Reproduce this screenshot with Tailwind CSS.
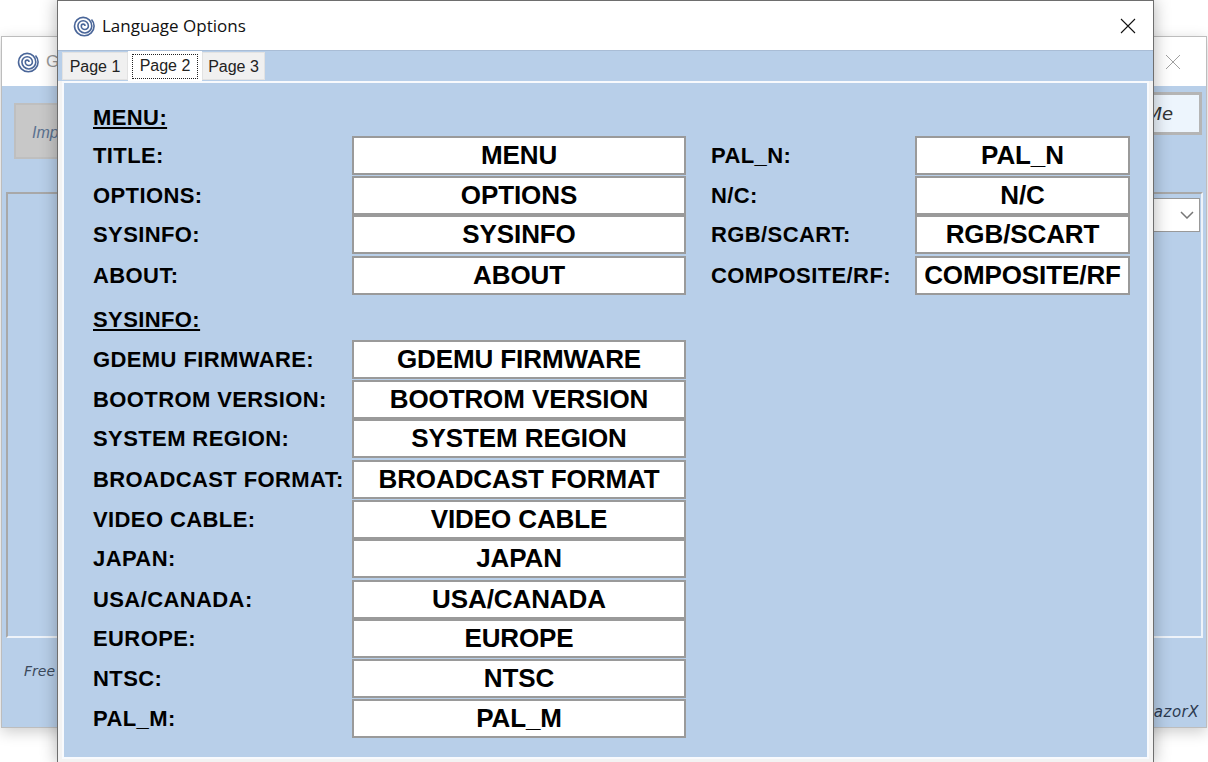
<!DOCTYPE html>
<html lang="en">
<head>
    <meta charset="UTF-8">
    <title>Language Options</title>
    <script src="https://cdn.jsdelivr.net/npm/@tailwindcss/browser@4"></script>
</head>
<body class="bg-white font-['Liberation_Sans',sans-serif] overflow-hidden">
<div class="relative w-[1208px] h-[762px] overflow-hidden bg-white">

    <!-- Window behind -->
    <div class="absolute left-[1px] top-[36px] w-[1206px] h-[692px] border border-[#bdbdbd] bg-white shadow-[0_4px_14px_rgba(0,0,0,0.2)] flex flex-col">
        <div class="h-[49px] flex items-center justify-between pl-[14px] pr-[25px] shrink-0">
            <div class="flex items-center gap-[6px]">
                <svg width="24" height="24" viewBox="0 0 24 24" fill="none" stroke="#4a6699" stroke-width="1.600"><path d="M13 12A1.850 1.850 0 0 0 9.300 12A3.550 3.550 0 0 0 16.400 12A5.250 5.250 0 0 0 5.900 12A6.950 6.950 0 0 0 19.800 12A8.650 8.650 0 0 0 2.500 12A9.800 9.800 0 0 0 22.100 12A10 10 0 0 0 19.500 5.500"/></svg>
                <span class="text-[17px] text-[#999]">G</span>
            </div>
            <svg width="16" height="16" viewBox="0 0 16 16" stroke="#a0a0a0" stroke-width="1"><path d="M1 1l14 14M15 1L1 15"/></svg>
        </div>
        <div class="flex-1 bg-[#b8cfe9] relative">
            <div class="absolute left-[12px] top-[17px] w-[60px] h-[56px] bg-[#c8c8c8] border-2 border-[#bfbfbf] pl-[16px] pt-[16px] text-[16px] italic text-[#5b7290]">Imp</div>
            <div class="absolute right-[4px] top-[6px] w-[80px] h-[43px] bg-[#edf5fd] border-[3px] border-[#b5b5b5] pr-[26px] text-[18px] italic font-['DejaVu_Sans',sans-serif] text-[#333] flex items-center justify-end">Me</div>
            <div class="absolute left-[4px] top-[106px] right-[3px] h-[446px] border-2 border-t-[#a8a8a8] border-l-[#a8a8a8] border-r-[#eef3f9] border-b-[#eef3f9]"></div>
            <div class="absolute right-[6px] top-[112px] w-[60px] h-[34px] bg-white border border-[#999] flex items-center justify-end pr-[5px]">
                <svg width="14" height="8" viewBox="0 0 14 8" fill="none" stroke="#777" stroke-width="1.500"><path d="M1 1l6 6 6-6"/></svg>
            </div>
            <span class="absolute left-[22px] top-[575px] text-[14px] italic font-['DejaVu_Sans',sans-serif] text-[#3c4a5c]">Free</span>
            <span class="absolute right-[7px] top-[615px] text-[15px] italic font-['DejaVu_Sans',sans-serif] text-[#2c3a50] tracking-[0.5px]">azorX</span>
        </div>
    </div>

    <!-- Language Options window -->
    <div class="absolute left-[57px] top-0 w-[1097px] h-[763px] border border-[#6e6e6e] bg-white shadow-[0_0_16px_rgba(0,0,0,0.3)] flex flex-col">
        <div class="h-[49px] shrink-0 flex items-center justify-between pl-[14px] pr-[17px]">
            <div class="flex items-center gap-[6px]">
                <svg width="24" height="24" viewBox="0 0 24 24" fill="none" stroke="#4a6699" stroke-width="1.600"><path d="M13 12A1.850 1.850 0 0 0 9.300 12A3.550 3.550 0 0 0 16.400 12A5.250 5.250 0 0 0 5.900 12A6.950 6.950 0 0 0 19.800 12A8.650 8.650 0 0 0 2.500 12A9.800 9.800 0 0 0 22.100 12A10 10 0 0 0 19.500 5.500"/></svg>
                <span class="text-[17px] font-['Open_Sans',sans-serif] text-[#111]">Language Options</span>
            </div>
            <svg width="16" height="16" viewBox="0 0 16 16" stroke="#111" stroke-width="1.100"><path d="M1 1l14 14M15 1L1 15"/></svg>
        </div>

        <div class="flex-1 border-t border-[#a9bdd6] flex flex-col bg-[#f3f3f3]">
            <!-- Tabs -->
            <div class="h-[30px] bg-[#b8cfe9] flex items-end pl-[4px] text-[16px] text-[#222] shrink-0">
                <div class="h-[28px] mb-px pt-[2px] w-[66px] bg-[#f0f0f0] border border-[#e2e2e2] flex items-center justify-center">Page 1</div>
                <div class="h-[30px] w-[74px] bg-white px-[4px] pt-[3px] pb-[2px] relative">
                    <div class="h-[25px] pb-[2px] border border-dotted border-[#222] flex items-center justify-center">Page 2</div>
                </div>
                <div class="h-[28px] mb-px pt-[2px] w-[63px] bg-[#f0f0f0] border border-[#e2e2e2] flex items-center justify-center">Page 3</div>
            </div>

            <!-- Tab body -->
            <div class="h-[678px] mx-[4px] shrink-0 border-2 border-[#f8fafd] bg-[#b8cfe9] pl-[29px] pr-[15px] pt-[23px] flex text-black font-bold">
                <div class="w-[593px] shrink-0">
                    <p class="text-[22px] tracking-[0.4px] leading-[24px] underline h-[24px]">MENU:</p>
                    <div class="mt-[6px] flex flex-col">
                        <div class="flex items-center h-[39px]"><span class="w-[259px] text-[22px] tracking-[0.4px]">TITLE:</span><span class="w-[334px] h-[39px] bg-white border-2 border-[#9a9a9a] flex items-center justify-center text-[26px] tracking-[-0.1px]">MENU</span></div>
                        <div class="flex items-center h-[39px] mt-[1px]"><span class="w-[259px] text-[22px] tracking-[0.4px]">OPTIONS:</span><span class="w-[334px] h-[39px] bg-white border-2 border-[#9a9a9a] flex items-center justify-center text-[26px] tracking-[-0.1px]">OPTIONS</span></div>
                        <div class="flex items-center h-[39px]"><span class="w-[259px] text-[22px] tracking-[0.4px]">SYSINFO:</span><span class="w-[334px] h-[39px] bg-white border-2 border-[#9a9a9a] flex items-center justify-center text-[26px] tracking-[-0.1px]">SYSINFO</span></div>
                        <div class="flex items-center h-[39px] mt-[2px]"><span class="w-[259px] text-[22px] tracking-[0.4px]">ABOUT:</span><span class="w-[334px] h-[39px] bg-white border-2 border-[#9a9a9a] flex items-center justify-center text-[26px] tracking-[-0.1px]">ABOUT</span></div>
                    </div>
                    <p class="mt-[13px] text-[22px] tracking-[0.4px] leading-[24px] underline h-[24px]">SYSINFO:</p>
                    <div class="mt-[8px] flex flex-col">
                        <div class="flex items-center h-[39px]"><span class="w-[259px] text-[22px] tracking-[0.4px]">GDEMU FIRMWARE:</span><span class="w-[334px] h-[39px] bg-white border-2 border-[#9a9a9a] flex items-center justify-center text-[26px] tracking-[-0.1px]">GDEMU FIRMWARE</span></div>
                        <div class="flex items-center h-[39px] mt-[1px]"><span class="w-[259px] text-[22px] tracking-[0.4px]">BOOTROM VERSION:</span><span class="w-[334px] h-[39px] bg-white border-2 border-[#9a9a9a] flex items-center justify-center text-[26px] tracking-[-0.1px]">BOOTROM VERSION</span></div>
                        <div class="flex items-center h-[39px]"><span class="w-[259px] text-[22px] tracking-[0.4px]">SYSTEM REGION:</span><span class="w-[334px] h-[39px] bg-white border-2 border-[#9a9a9a] flex items-center justify-center text-[26px] tracking-[-0.1px]">SYSTEM REGION</span></div>
                        <div class="flex items-center h-[39px] mt-[2px]"><span class="w-[259px] text-[22px] tracking-[0.4px]">BROADCAST FORMAT:</span><span class="w-[334px] h-[39px] bg-white border-2 border-[#9a9a9a] flex items-center justify-center text-[26px] tracking-[-0.1px]">BROADCAST FORMAT</span></div>
                        <div class="flex items-center h-[39px] mt-[1px]"><span class="w-[259px] text-[22px] tracking-[0.4px]">VIDEO CABLE:</span><span class="w-[334px] h-[39px] bg-white border-2 border-[#9a9a9a] flex items-center justify-center text-[26px] tracking-[-0.1px]">VIDEO CABLE</span></div>
                        <div class="flex items-center h-[39px]"><span class="w-[259px] text-[22px] tracking-[0.4px]">JAPAN:</span><span class="w-[334px] h-[39px] bg-white border-2 border-[#9a9a9a] flex items-center justify-center text-[26px] tracking-[-0.1px]">JAPAN</span></div>
                        <div class="flex items-center h-[39px] mt-[2px]"><span class="w-[259px] text-[22px] tracking-[0.4px]">USA/CANADA:</span><span class="w-[334px] h-[39px] bg-white border-2 border-[#9a9a9a] flex items-center justify-center text-[26px] tracking-[-0.1px]">USA/CANADA</span></div>
                        <div class="flex items-center h-[39px]"><span class="w-[259px] text-[22px] tracking-[0.4px]">EUROPE:</span><span class="w-[334px] h-[39px] bg-white border-2 border-[#9a9a9a] flex items-center justify-center text-[26px] tracking-[-0.1px]">EUROPE</span></div>
                        <div class="flex items-center h-[39px] mt-[1px]"><span class="w-[259px] text-[22px] tracking-[0.4px]">NTSC:</span><span class="w-[334px] h-[39px] bg-white border-2 border-[#9a9a9a] flex items-center justify-center text-[26px] tracking-[-0.1px]">NTSC</span></div>
                        <div class="flex items-center h-[39px] mt-[1px]"><span class="w-[259px] text-[22px] tracking-[0.4px]">PAL_M:</span><span class="w-[334px] h-[39px] bg-white border-2 border-[#9a9a9a] flex items-center justify-center text-[26px] tracking-[-0.1px]">PAL_M</span></div>
                    </div>
                </div>
                <div class="ml-[25px] pt-[30px] flex-1">
                    <div class="flex items-center h-[39px]"><span class="w-[204px] text-[22px] tracking-[0.4px]">PAL_N:</span><span class="w-[215px] h-[39px] bg-white border-2 border-[#9a9a9a] flex items-center justify-center text-[26px] tracking-[-0.1px]">PAL_N</span></div>
                    <div class="flex items-center h-[39px] mt-[1px]"><span class="w-[204px] text-[22px] tracking-[0.4px]">N/C:</span><span class="w-[215px] h-[39px] bg-white border-2 border-[#9a9a9a] flex items-center justify-center text-[26px] tracking-[-0.1px]">N/C</span></div>
                    <div class="flex items-center h-[39px]"><span class="w-[204px] text-[22px] tracking-[0.4px]">RGB/SCART:</span><span class="w-[215px] h-[39px] bg-white border-2 border-[#9a9a9a] flex items-center justify-center text-[26px] tracking-[-0.1px]">RGB/SCART</span></div>
                    <div class="flex items-center h-[39px] mt-[2px]"><span class="w-[204px] text-[22px] tracking-[0.4px]">COMPOSITE/RF:</span><span class="w-[215px] h-[39px] bg-white border-2 border-[#9a9a9a] flex items-center justify-center text-[26px] tracking-[-0.1px]">COMPOSITE/RF</span></div>
                </div>
            </div>
        </div>
    </div>
</div>
</body>
</html>
